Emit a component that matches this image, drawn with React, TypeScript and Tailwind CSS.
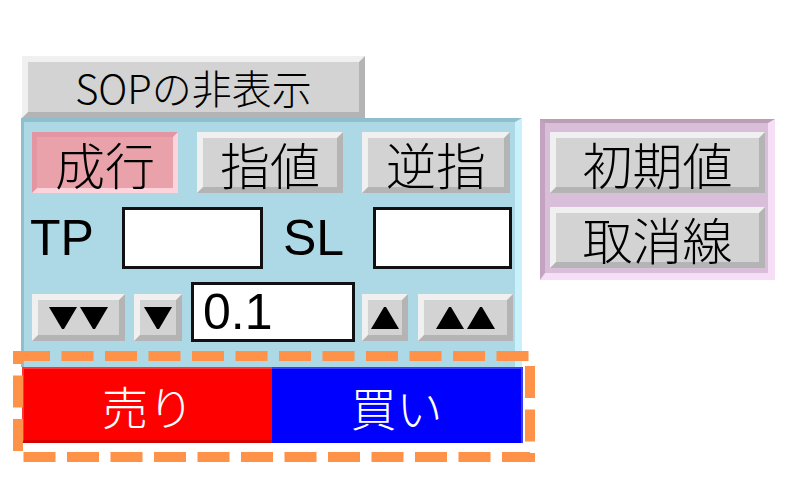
import React from "react";

const jp = "font-['Noto_Sans_CJK_JP','Noto_Sans',sans-serif]";
const lat = "font-['Liberation_Sans','Noto_Sans_CJK_JP',Arial,sans-serif]";

function GrayBtn({ children, className = "" }: { children: React.ReactNode; className?: string }) {
  return (
    <div
      className={`flex items-center justify-center border-[6px] border-t-[#f0f0f0] border-l-[#f0f0f0] border-r-[#b4b4b4] border-b-[#b4b4b4] bg-[#d3d3d3] leading-none text-black ${className}`}
    >
      {children}
    </div>
  );
}

function Down() {
  return (
    <svg width="28" height="22" viewBox="0 0 28 22">
      <polygon points="0,0 28,0 15,22 13,22" fill="#000" />
    </svg>
  );
}

function Up() {
  return (
    <svg width="28" height="22" viewBox="0 0 28 22">
      <polygon points="13,0 15,0 28,22 0,22" fill="#000" />
    </svg>
  );
}

export default function App() {
  return (
    <div className={`relative h-[500px] w-[800px] overflow-hidden bg-white font-light ${jp}`}>
      <div className="flex items-start gap-[18px] pl-[21px] pt-[56px]">
        {/* left column */}
        <div className="flex w-[501px] flex-col">
          <GrayBtn className="ml-[1px] h-[62px] w-[343px] text-[40px]">SOPの非表示</GrayBtn>

          <div className="border-l-[3px] border-r-[7px] border-t-[4px] border-l-[#8fbfcf] border-r-[#c9f1fb] border-t-[#8fbfcf] bg-[#add8e6] pb-[25px] pt-[10px]">
            {/* row 1 */}
            <div className="flex gap-[19px] pl-[8px]">
              <div className="flex h-[61px] w-[146px] items-center justify-center border-[5px] border-b-[#ffd3dc] border-l-[#e396a2] border-r-[#ffd3dc] border-t-[#e396a2] bg-[#e9a1aa] text-[50px] leading-none text-black">
                成行
              </div>
              <GrayBtn className="h-[61px] w-[146px] text-[50px]">指値</GrayBtn>
              <GrayBtn className="h-[61px] w-[148px] text-[50px]">逆指</GrayBtn>
            </div>

            {/* row 2 */}
            <div className="mt-[14px] flex items-center">
              <span className={`ml-[6px] w-[92px] text-[50px] font-normal leading-none text-black ${lat}`}>TP</span>
              <div className="h-[62px] w-[141px] border-[3px] border-[#111] bg-white" />
              <span className={`ml-[20px] w-[90px] text-[50px] font-normal leading-none text-black ${lat}`}>SL</span>
              <div className="h-[62px] w-[139px] border-[3px] border-[#111] bg-white" />
            </div>

            {/* row 3 */}
            <div className="mt-[13px] flex items-end pl-[8px]">
              <GrayBtn className="mb-[1px] h-[47px] w-[93px] gap-[3px]">
                <Down />
                <Down />
              </GrayBtn>
              <GrayBtn className="mb-[1px] ml-[9px] h-[47px] w-[48px]">
                <Down />
              </GrayBtn>
              <div
                className={`ml-[9px] flex h-[60px] w-[164px] items-center border-[3px] border-[#111] bg-white pl-[9px] text-[50px] font-normal leading-none text-black ${lat}`}
              >
                0.1
              </div>
              <GrayBtn className="mb-[1px] ml-[7px] h-[47px] w-[46px]">
                <Up />
              </GrayBtn>
              <GrayBtn className="mb-[1px] ml-[10px] h-[47px] w-[95px] gap-[3px]">
                <Up />
                <Up />
              </GrayBtn>
            </div>
          </div>

          {/* sell / buy bar */}
          <div className="relative ml-[1px] flex h-[76px] w-[501px]">
            <div className="flex h-full w-[250px] items-center justify-center border-b-[3px] border-l-[2px] border-t-[2px] border-b-[#d40000] border-l-[#ff3535] border-t-[#ff3535] bg-[#ff0000] text-[46px] leading-none text-white">
              売り
            </div>
            <div className="flex h-full w-[251px] items-center justify-center border-r-[2px] border-t-[2px] border-r-[#3a3aff] border-t-[#3a3aff] bg-[#0000ff] text-[46px] leading-none text-white">
              買い
            </div>
            <svg
              className="pointer-events-none absolute left-[-9px] top-[-16px]"
              width="522"
              height="111"
              viewBox="0 0 522 111"
            >
              <rect
                x="5"
                y="5"
                width="512"
                height="101"
                fill="none"
                stroke="#ff9249"
                strokeWidth="10"
                strokeDasharray="32 11.5"
              />
            </svg>
          </div>
        </div>

        {/* right panel */}
        <div className="mt-[63px] flex w-[235px] flex-col gap-[14px] border-b-[7px] border-l-[5px] border-r-[7px] border-t-[4px] border-b-[#f6dff6] border-l-[#c3a3bf] border-r-[#f6dff6] border-t-[#bb9db6] bg-[#d8bed8] pb-[5px] pl-[5px] pr-[3px] pt-[9px]">
          <GrayBtn className="h-[61px] w-[215px] text-[50px]">初期値</GrayBtn>
          <GrayBtn className="h-[61px] w-[215px] text-[50px]">取消線</GrayBtn>
        </div>
      </div>
    </div>
  );
}
